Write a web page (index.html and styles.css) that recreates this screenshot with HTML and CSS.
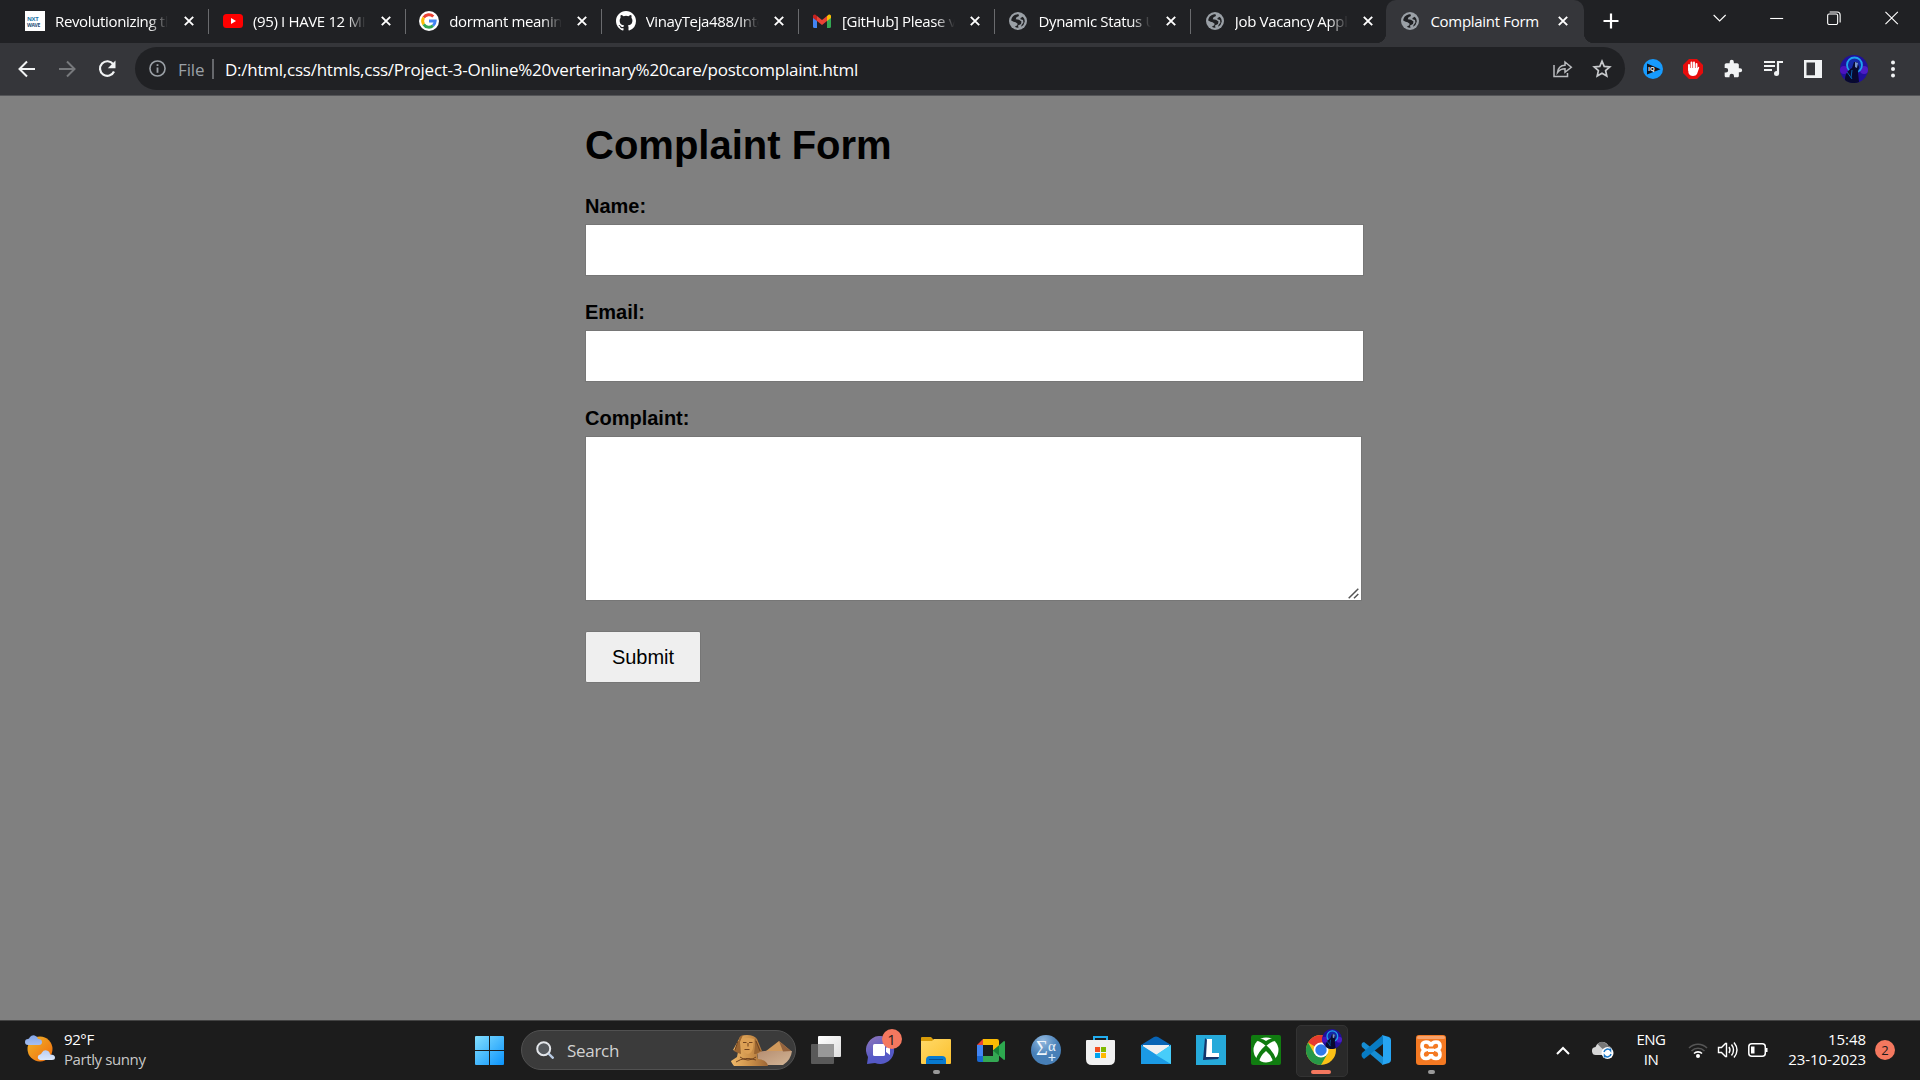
FILE: index.html
```html
<!DOCTYPE html>
<html lang="en">
<head>
<meta charset="utf-8">
<title>Complaint Form</title>
<link rel="stylesheet" href="styles.css">
</head>
<body>
<svg class="defs" width="0" height="0">
  <symbol id="globe" viewBox="0 0 18 18"><circle cx="9" cy="9" r="9" fill="#9aa0a6"/><path d="M2.200 8.500C2.500 4.500 5.500 2.200 9.500 2.200L10 4 7.500 5.200 6.700 7.200l3.300.6 2.500 1.700-.5 2.500-3 1.500.5 2.200q-2 .2-3.700-1l2.500-1.500.3-1.500-2-1.500-2-.5z" fill="#202124"/><path d="M11.500 6l2.300-1.200q2 2 2 4.700-.6 3.500-3.600 5.200l.3-1.700 1.900-2.500-.4-2.500-2.500-.8z" fill="#202124"/></symbol>
  <symbol id="x" viewBox="0 0 10 10"><path d="M.8.8l8.400 8.400M9.200.8L.8 9.200" stroke="#fff" stroke-width="1.900"/></symbol>
  <symbol id="face" viewBox="0 0 28 28"><circle cx="14" cy="14" r="14" fill="#20109c"/><circle cx="4" cy="15" r="4" fill="#4c12bd"/><circle cx="24" cy="15" r="4" fill="#4c1cc5"/><circle cx="14.500" cy="10" r="7.500" fill="#1529a9" stroke="#1fa4ee" stroke-width="1.800"/><path d="M5 25c0-6 3-10 7-12l2-6 3 0 2 5-1 5 1 10c-5 2-11 1-14-2z" fill="#08092f"/><path d="M15 7l3 1-1 5-2-1z" fill="#7894ca"/><path d="M7 17l5 7M12 15l-1 8" stroke="#0a62ae"/></symbol>
</svg>

<header class="tabs">
  <div class="tab"><svg class="fav" viewBox="0 0 20 20"><path d="M0 0h20v20H0z" fill="#fff"/><text x="2" y="10" class="nxt blue">NXT</text><text x="2" y="15.500" class="wave">WAVE</text></svg><span>Revolutionizing the</span><svg class="close"><use href="#x"/></svg></div>
  <div class="tab"><svg class="fav" viewBox="0 0 20 20"><rect y="3" width="20" height="14" rx="3.500" fill="red"/><path d="M8 7l5 3-5 3z" fill="#fff"/></svg><span>(95) I HAVE 12 MIN</span><svg class="close"><use href="#x"/></svg></div>
  <div class="tab"><svg class="fav" viewBox="0 0 20 20"><circle cx="10" cy="10" r="10" fill="#fff"/><g fill="none" stroke-width="2.900"><path d="M4.700 6.600A6.200 6.200 0 0 1 14.300 5.500" stroke="#ea4335"/><path d="M4.700 6.600a6.200 6.200 0 0 0 0 6.800" stroke="#fbbc05"/><path d="M4.700 13.400a6.200 6.200 0 0 0 9.300 1.300" stroke="#34a853"/><path d="M14 14.700A6.200 6.200 0 0 0 16.200 10H10" stroke="#4285f4"/></g></svg><span>dormant meaning</span><svg class="close"><use href="#x"/></svg></div>
  <div class="tab"><svg class="fav" viewBox="0 0 16 16"><path fill="#fff" d="M8 0C3.580 0 0 3.580 0 8c0 3.540 2.290 6.530 5.470 7.590.4.070.55-.17.55-.38 0-.19-.01-.82-.01-1.490-2.010.37-2.530-.49-2.690-.94-.09-.23-.48-.94-.82-1.130-.28-.15-.68-.52-.01-.53.63-.01 1.080.58 1.230.82.72 1.210 1.870.87 2.330.66.070-.52.28-.87.51-1.070-1.780-.2-3.640-.89-3.640-3.950 0-.87.31-1.590.82-2.150-.08-.2-.36-1.020.08-2.120 0 0 .67-.21 2.200.82a7.600 7.600 0 0 1 4 0c1.530-1.040 2.200-.82 2.200-.82.44 1.100.16 1.920.08 2.120.51.56.82 1.270.82 2.150 0 3.070-1.870 3.750-3.650 3.950.29.25.54.73.54 1.480 0 1.070-.01 1.930-.01 2.200 0 .21.15.46.55.38A8.010 8.010 0 0 0 16 8c0-4.420-3.580-8-8-8z"/></svg><span>VinayTeja488/Intern</span><svg class="close"><use href="#x"/></svg></div>
  <div class="tab"><svg class="fav" viewBox="0 0 20 20"><path d="M1 6l4 3v8H2.500Q1 17 1 15.500z" fill="#4285f4"/><path d="M15 9l4-3v9.500q0 1.500-1.500 1.500H15z" fill="#34a853"/><path d="M15 5l1.500-1.200c1.200-.9 2.500.1 2.500 1.200v2l-4 3z" fill="#fbbc04"/><path d="M5 5l5 4 5-4v5l-5 4-5-4z" fill="#ea4335"/><path d="M1 7V5c0-1.100 1.300-2.100 2.500-1.200L5 5v5z" fill="#c5221f"/></svg><span>[GitHub] Please verify</span><svg class="close"><use href="#x"/></svg></div>
  <div class="tab"><svg class="fav globe"><use href="#globe"/></svg><span>Dynamic Status Up</span><svg class="close"><use href="#x"/></svg></div>
  <div class="tab last"><svg class="fav globe"><use href="#globe"/></svg><span>Job Vacancy Appl</span><svg class="close"><use href="#x"/></svg></div>
  <div class="tab active"><svg class="fav globe"><use href="#globe"/></svg><span>Complaint Form</span><svg class="close"><use href="#x"/></svg></div>
  <svg class="plus" viewBox="0 0 16 16"><path d="M8 .5v15M.5 8h15" stroke="#fff" stroke-width="2.200"/></svg>
  <div class="window-buttons">
    <svg viewBox="0 0 14 14"><path d="M1 4l6 6 6-6" /></svg>
    <svg viewBox="0 0 14 14"><path d="M.5 7.500h13"/></svg>
    <svg viewBox="0 0 14 14"><rect x="1" y="3" width="10" height="10.500" rx="1.500"/><path d="M3 1h7.500q3 0 3 3v7.500"/></svg>
    <svg viewBox="0 0 14 14"><path d="M.8.800l12.400 12.400M13.200.8L.8 13.200"/></svg>
  </div>
</header>

<nav class="toolbar">
  <div class="nav-buttons">
    <svg viewBox="0 0 20 20"><path d="M18 10H3M10 2.500L2.500 10l7.500 7.500" stroke="#f1f3f4" stroke-width="2"/></svg>
    <svg viewBox="0 0 20 20"><path d="M2 10h15M10 2.500l7.500 7.500-7.500 7.500" stroke="#77797c" stroke-width="2"/></svg>
    <svg viewBox="0 0 20 20"><path d="M16.200 5.200A7.300 7.300 0 1 0 17 12.500" stroke="#f1f3f4" stroke-width="2.200"/><path d="M18.500 1.500v7.700h-7.700z" fill="#f1f3f4"/></svg>
  </div>
  <div class="omnibox">
    <svg class="info" viewBox="0 0 16 16"><circle cx="8" cy="8" r="7.100" stroke="#9aa0a6" stroke-width="1.500"/><path d="M8 7v5M8 4v1.700" stroke="#9aa0a6" stroke-width="1.700"/></svg>
    <span class="scheme">File</span><i></i>
    <span class="url">D:/html,css/htmls,css/Project-3-Online%20verterinary%20care/postcomplaint.html</span>
    <svg class="share" viewBox="0 0 20 20"><path d="M1 6v11.500h13.500V14M4.500 13.500c.5-4.500 3-7 7.500-7.200V3l6.300 5.300-6.300 5v-3.500c-3.500 0-5.500 1-7.500 3.700z" stroke="#b9bbbe" stroke-width="1.500"/></svg>
    <svg class="star" viewBox="0 0 20 20"><path d="M10 2.200l2.200 5.200 5.600.5-4.200 3.700 1.200 5.500L10 14.200l-4.800 2.900 1.200-5.500-4.200-3.700 5.600-.5z" stroke="#c7c9cc" stroke-width="1.700"/></svg>
  </div>
  <div class="extensions">
    <svg viewBox="0 0 20 20"><circle cx="10" cy="10" r="10" fill="#179bfd"/><path d="M4 4.500l13.500 5.700L4 15.500z" fill="#10131a"/><text class="iq" x="5" y="12.200">IQ</text></svg>
    <svg viewBox="0 0 20 20"><path d="M6 0h8l6 6v8l-6 6H6l-6-6V6z" fill="#e60c0c"/><path d="M6 11V6M8.500 10V3.500M11 10V3.500M13.500 11V5" stroke="#fff" stroke-width="1.900" stroke-linecap="round"/><path d="M5.100 9h9.300l1-1.300q1 0 .8 1L14 15q-1 2-4 2-3.500 0-4.500-3z" fill="#fff"/></svg>
    <svg viewBox="0 0 24 24"><path d="M20.500 11H19V7c0-1.100-.9-2-2-2h-4V3.500a2.500 2.500 0 0 0-5 0V5H4c-1.100 0-2 .9-2 2v3.800h1.500a2.700 2.700 0 0 1 0 5.400H2V20c0 1.100.9 2 2 2h3.800v-1.500a2.700 2.700 0 0 1 5.400 0V22H17c1.100 0 2-.9 2-2v-4h1.500a2.500 2.500 0 0 0 0-5z" fill="#f1f3f4"/></svg>
    <svg viewBox="0 0 20 20"><path d="M1 3h11M1 7h11M1 11h8" stroke="#f1f3f4" stroke-width="2"/><circle cx="13.500" cy="14.500" r="2.500" fill="#f1f3f4"/><path d="M15 15V3h5" stroke="#f1f3f4" stroke-width="2.200"/></svg>
    <svg viewBox="0 0 20 20"><path d="M1 1h18v18H1zM3.500 3.500v12.800h8.500V3.500z" fill="#f1f3f4" fill-rule="evenodd"/></svg>
    <svg class="avatar"><use href="#face"/></svg>
    <svg viewBox="0 0 20 20"><g fill="#f1f3f4"><circle cx="10" cy="3.500" r="2"/><circle cx="10" cy="10" r="2"/><circle cx="10" cy="16.500" r="2"/></g></svg>
  </div>
</nav>

<main class="page">
  <form class="complaint">
    <h1>Complaint Form</h1>
    <label for="name">Name:</label>
    <input id="name" type="text">
    <label for="email">Email:</label>
    <input id="email" type="email">
    <label for="complaint">Complaint:</label>
    <div class="message">
      <textarea id="complaint"></textarea>
      <svg class="grip" viewBox="0 0 11 11"><path d="M.7 10.300l9.600-9.600M6 10.300l4.300-4.300" stroke="#555" stroke-width="1.500"/></svg>
    </div>
    <button type="button">Submit</button>
  </form>
</main>

<footer class="taskbar">
  <div class="weather">
    <svg viewBox="0 0 30 28"><defs><linearGradient id="sun" x2="1" y2="1"><stop stop-color="#efb62a"/><stop offset="1" stop-color="#f26a0b"/></linearGradient><linearGradient id="cloud" x2="0" y2="1"><stop stop-color="#83a5e8"/><stop offset="1" stop-color="#dce8fc"/></linearGradient></defs><circle cx="15" cy="15" r="12.500" fill="url(#sun)"/><path d="M3 11a3 3 0 0 1 0-6Q4 5 5 3a4.500 4.500 0 0 1 8 2q4 0 4 3t-3 3zM15 26a2.800 2.800 0 0 1 0-5.500q1 0 2-2a4.300 4.300 0 0 1 8 2q5 0 5 3 0 2.500-3 2.500z" fill="url(#cloud)"/></svg>
    <div><b>92°F</b><span>Partly sunny</span></div>
  </div>
  <div class="app"><svg width="29" height="29" viewBox="0 0 29 29"><defs><linearGradient id="win" x2="1" y2="1"><stop stop-color="#83dfff"/><stop offset="1" stop-color="#0b93fb"/></linearGradient></defs><path d="M1 0h13v14H0V1q0-1 1-1zM15 0h13q1 0 1 1v13H15zM0 15h14v14H1q-1 0-1-1zM15 15h14v13q0 1-1 1H15z" fill="url(#win)"/></svg></div>
  <div class="search">
    <svg class="lens" viewBox="0 0 18 18"><circle cx="7.700" cy="7.700" r="6.500" fill="#55595d" stroke="#e3e6ea" stroke-width="2"/><path d="M12.500 12.500l5 5" stroke="#b9cbe3" stroke-width="2.400"/></svg>
    <span>Search</span>
    <svg class="sphinx" viewBox="0 0 61 31"><defs><linearGradient id="sand" x2="1"><stop stop-color="#f0b969"/><stop offset=".55" stop-color="#c98e48"/><stop offset="1" stop-color="#9b6535"/></linearGradient><linearGradient id="dune" x2="1" y2="1"><stop stop-color="#b58d70"/><stop offset="1" stop-color="#d3b596"/></linearGradient></defs><path d="M26 17q17-3 35-1-1 9-9 14H28z" fill="url(#dune)"/><path d="M48 6l12 10H35z" fill="#d19a5c"/><path d="M48 6l12 10-8 .5z" fill="#94633e"/><path d="M8 4Q9 0 16 0t10 4l5 12-5 3 1 5q9 1 10 7H3q-3-4-3-5l6-4 1-5-5-2z" fill="url(#sand)"/><path d="M8 5Q8 1 12 0L9 7l1 12-3-1-4-2zM24 3l6 13-5 3-2 0 1-8z" fill="#9a6531"/><path d="M10 4q6-2 13 0l-1 9q-1 5-5 6-5-1-6-6z" fill="#dca055"/><path d="M7 6l-3 9M25 6l4 10M12 7.500h3.500M18 7.500h3.500M13.500 14.500h5M17 8v3.500M9 22q8 6 16 0M5 27q9-6 20-2" fill="none" stroke="#70431f" stroke-width="1"/></svg>
  </div>
  <div class="app"><svg width="30" height="28" viewBox="0 0 30 28"><defs><linearGradient id="pane" x2="1" y2="1"><stop stop-color="#fff"/><stop offset="1" stop-color="#dedede"/></linearGradient></defs><rect y="8" width="23" height="20" rx="1" fill="#595959"/><rect x="7" width="23" height="21" rx="1" fill="url(#pane)"/><path d="M7 8h16v13H7z" fill="#989898"/></svg></div>
  <div class="app"><svg width="30" height="29" viewBox="0 0 30 29"><defs><linearGradient id="chat" x2=".5" y2="1"><stop stop-color="#9277b8"/><stop offset=".7" stop-color="#5559c6"/></linearGradient></defs><path d="M15 0a14 14 0 1 1-6 27L1 28l1-7A14 14 0 0 1 15 0z" fill="url(#chat)"/><rect x="7" y="8" width="12" height="12" rx="1.500" fill="#fff"/><path d="M20 12l4-3v10l-4-3z" fill="#fff"/></svg><em>1</em></div>
  <div class="app running"><svg width="30" height="28" viewBox="0 0 30 28"><defs><linearGradient id="folder" x2="1" y2="1"><stop stop-color="#ffd968"/><stop offset="1" stop-color="#fcc02d"/></linearGradient></defs><path d="M0 8V2q0-1 1-1h9l3 3h6v5z" fill="#d99c09"/><path d="M0 5h11l2-2h16q1 0 1 1v23q0 1-1 1H1q-1 0-1-1z" fill="url(#folder)"/><path d="M5 28v-4q0-4 4-4h12q4 0 4 4v4z" fill="#087ad0"/><path d="M8 23.500h14" stroke="#064f94" stroke-width="1"/></svg></div>
  <div class="app"><svg width="28" height="23" viewBox="0 0 28 23"><path d="M0 6l6-6v6z" fill="#ea4335"/><path d="M0 6h6v11H0z" fill="#4285f4"/><path d="M0 17h6v6H2q-2 0-2-2z" fill="#1967d2"/><path d="M6 0h14q2 0 2 2v10h-6V6H6z" fill="#fbbc04"/><path d="M6 17h10v-6h6v10q0 2-2 2H6z" fill="#34a853"/><path d="M16 11.500L27 2q1 0 1 1v17q0 1-1 1z" fill="#2da94f"/><path d="M16 11.500l6-5v10z" fill="#188038"/></svg></div>
  <div class="app"><svg width="30" height="30" viewBox="0 0 30 30"><defs><radialGradient id="orb" cx=".4" cy=".2"><stop stop-color="#92b9df"/><stop offset="1" stop-color="#477fb7"/></radialGradient></defs><circle cx="15" cy="15" r="15" fill="url(#orb)"/><text class="sigma" x="5" y="20">Σ</text><text class="alpha" x="17" y="16">α</text><path d="M21 19v7M17.500 22.500h7" stroke="#e2edf7" stroke-width="1.200"/></svg></div>
  <div class="app store"><svg width="29" height="29" viewBox="0 0 29 29"><path d="M8 6V1h13v5" fill="none" stroke="#22aef0" stroke-width="2"/><path d="M1 4h27q1 0 1 1v18q0 6-6 6H6q-6 0-6-6V5q0-1 1-1z" fill="#f1f1f1"/><path d="M9 11h5v5H9z" fill="#f25022"/><path d="M15 11h5v5h-5z" fill="#7fba00"/><path d="M9 17h5v5H9z" fill="#00a4ef"/><path d="M15 17h5v5h-5z" fill="#ffb900"/></svg></div>
  <div class="app"><svg width="30" height="28" viewBox="0 0 30 28"><path d="M0 9L13 1q2-1 4 0l13 8v4H0z" fill="#0864b5"/><path d="M2 9h26v6L15 22 2 14z" fill="#efeff1"/><path d="M0 9l15 10L30 9v19H0z" fill="#32bef1"/><path d="M0 9l30 19H0z" fill="#1b9ae5"/><path d="M15 19L30 9v19z" fill="#47cdfa"/></svg></div>
  <div class="app"><svg width="30" height="30" viewBox="0 0 30 30"><path d="M0 0h30v30H0z" fill="#26aada"/><path d="M9 3l2 2v16l12 1-1 2-15 1z" fill="#14346a"/><path d="M11 4h5v14h7v4H10z" fill="#fff"/></svg></div>
  <div class="app"><svg width="30" height="30" viewBox="0 0 30 30"><rect width="30" height="30" rx="2" fill="#107c10"/><circle cx="15" cy="15" r="12.500" fill="#fff"/><path d="M6 6q3 0 9 5 6-5 9-5l-1-2q-4-1-8 2-4-3-8-2zM15 10Q7 17 5 24q2 3 3 3 1-6 7-11 6 5 7 11 1 0 3-3Q23 17 15 10z" fill="#107c10"/></svg></div>
  <div class="app current"><svg width="32" height="32" viewBox="0 0 32 32"><circle cx="16" cy="16" r="15" fill="#fbc116"/><path d="M16 16L3 8.500A15 15 0 0 1 29 8.500H16z" fill="#e63b2e"/><path d="M3 8.500A15 15 0 0 0 16 31l6.500-11.200L9.500 19.800z" fill="#279847"/><circle cx="16" cy="16" r="7.500" fill="#fff"/><circle cx="16" cy="16" r="5.700" fill="#3079eb"/></svg><svg class="profile"><use href="#face"/></svg></div>
  <div class="app"><svg width="30" height="30" viewBox="0 0 30 30"><path d="M1 8l2-1L22 22v8L1 12q-1-2 0-4z" fill="#168dd3"/><path d="M1 22l2 2L22 9V0L1 18q-1 2 0 4z" fill="#087bc3"/><path d="M21 0l7 2q2 1 2 3v20q0 2-2 3l-7 2q1-1 1-3V3q0-2-1-3z" fill="#27a5f3"/></svg></div>
  <div class="app running"><svg width="30" height="30" viewBox="0 0 30 30"><rect width="30" height="30" rx="3" fill="#f47922"/><rect x="1" y="1" width="28" height="3" rx="1.500" fill="#f6a26c"/><path d="M9 15q-3-1-3-4 0-4 4-4t5 4q1-4 5-4t4 4q0 3-3 4 3 1 3 4.500 0 4-4 4t-5-4q-1 4-5 4t-4-4Q6 16 9 15zM12 15.200h6" fill="none" stroke="#fff" stroke-width="3.600"/></svg></div>
  <div class="tray">
    <svg class="w40" width="14" height="9" viewBox="0 0 14 9"><path d="M1 8l6-6 6 6" fill="none" stroke="#fff" stroke-width="2"/></svg>
    <svg class="w40" width="21" height="18" viewBox="0 0 21 18"><path d="M4 14a4 4 0 0 1-1-8Q5 1 10 1q4 0 6 4 4 1 3 5l-4 4z" fill="#d6d6d6"/><path d="M5 3q5-5 10 1l4 3-5 4-5-4z" fill="#777"/><circle cx="15" cy="12" r="6" fill="#fff"/><path d="M11.500 11a3.700 3.700 0 0 1 6.500-1.500V7.500M18.500 13a3.700 3.700 0 0 1-6.500 1.500v2" fill="none" stroke="#1976c5" stroke-width="1.500"/></svg>
    <div class="language"><span>ENG</span><span>IN</span></div>
    <svg class="w30" width="20" height="16" viewBox="0 0 20 16"><g fill="none" stroke-width="1.600"><path d="M1 6a12.700 12.700 0 0 1 18 0M3.500 9a9.200 9.200 0 0 1 13 0" stroke="#555"/><path d="M6 11.500a5.700 5.700 0 0 1 8 0" stroke="#fff"/></g><circle cx="10" cy="14" r="2" fill="#fff"/></svg>
    <svg class="w30" width="21" height="18" viewBox="0 0 21 18"><path d="M1 6.500h3l4-4h1v13H8l-4-4H1zM11.500 6q2 3 0 6M14 3.500q4 5.500 0 11M16.500 1.500q6 7.500 0 15" fill="none" stroke="#fff" stroke-width="1.400"/></svg>
    <svg class="w30" width="20" height="14" viewBox="0 0 20 14"><rect x=".8" y=".8" width="16.500" height="12.400" rx="3" fill="none" stroke="#fff" stroke-width="1.500"/><path d="M3 3.500h3.500v7H3zM18 5h1.500v4H18z" fill="#fff"/></svg>
    <div class="clock"><span>15:48</span><span>23-10-2023</span></div>
    <strong>2</strong>
  </div>
</footer>
</body>
</html>
```
FILE: styles.css
```css
* { box-sizing: border-box; }
body { margin: 0; width: 1920px; height: 1080px; overflow: hidden; display: flex; flex-direction: column; background: #808080; font-family: "Open Sans", "Noto Sans", sans-serif; color: #fff; }
svg { display: block; flex: none; }
.defs { position: absolute; }

.tabs { height: 43px; padding-left: 12px; display: flex; background: #202124; }
.tab { position: relative; flex: none; width: 196.4px; height: 43px; display: flex; align-items: center; padding: 0 14px 1px 14.500px; font-size: 15px; letter-spacing: -.35px; }
.tab:first-child { padding-left: 13px; }
.tab::after { content: ""; position: absolute; right: -1px; top: 9px; width: 1px; height: 25px; background: #6a6b6e; }
.tab.last::after, .tab.active::after { display: none; }
.fav { width: 20px; height: 20px; }
.fav.globe { width: 18px; height: 18px; margin: 0 1px; }
.tab span { width: 114px; margin-left: 10px; overflow: hidden; white-space: nowrap; -webkit-mask-image: linear-gradient(90deg, #000 82%, transparent 99%); mask-image: linear-gradient(90deg, #000 82%, transparent 99%); }
.tab.active span { -webkit-mask-image: none; mask-image: none; letter-spacing: -.3px; }
.close { width: 10px; height: 10px; margin-left: auto; }
.tab.active { width: 198px; padding-right: 16px; background: #35363a; border-radius: 10px 10px 0 0; }
.tab.active { margin-left: -.8px; }
.tab.active::before { content: ""; position: absolute; left: -10px; right: -10px; bottom: 0; height: 10px; background: radial-gradient(circle at 0 0, transparent 10px, #35363a 10.500px) left / 10px 10px no-repeat, radial-gradient(circle at 100% 0, transparent 10px, #35363a 10.500px) right / 10px 10px no-repeat; }
.nxt, .wave { font: 700 6px "Open Sans", sans-serif; fill: #234b76; }
.nxt.blue { fill: #2878aa; }
.wave { font-size: 5px; }
.plus { width: 16px; height: 16px; margin: 13px 0 0 19px; }
.window-buttons { display: flex; margin-left: auto; }
.window-buttons svg { width: 57.300px; height: 14px; margin-top: 11px; fill: none; stroke: #fff; stroke-width: 1.100; }

.toolbar { height: 53px; padding: 0 7px 1px; display: flex; align-items: center; background: #35363a; border-bottom: 1px solid #535457; }
.nav-buttons { display: flex; width: 128px; }
.nav-buttons svg { width: 40px; height: 20px; fill: none; }
.omnibox { width: 1490px; height: 43px; border-radius: 22px; background: #202124; display: flex; align-items: center; padding: 0 13px 0 14px; font-size: 17px; }
.omnibox svg { fill: none; }
.omnibox span { padding-top: 1px; }
.info { width: 17px; height: 17px; }
.scheme { margin-left: 12px; width: 34px; color: #9aa0a6; letter-spacing: -.1px; }
.omnibox i { width: 2px; height: 20px; background: #66686c; }
.url { margin-left: 11px; white-space: nowrap; letter-spacing: -.24px; }
.share { width: 20px; height: 20px; margin-left: auto; }
.star { width: 20px; height: 20px; margin-left: 19px; }
.extensions { display: flex; align-items: center; margin-left: 7.500px; }
.extensions svg { width: 40px; height: 20px; fill: none; }
.extensions .avatar { width: 28px; height: 28px; margin: 0 5px 0 7px; }
.iq { font: 700 6px "Open Sans", sans-serif; fill: #fff; }

.page { height: 924px; background: #808080; }
.complaint { width: 780px; margin: 0 0 0 585px; padding-top: 26px; display: flex; flex-direction: column; align-items: flex-start; font: 20px/23px "Liberation Sans", Arial, sans-serif; color: #000; }
.complaint h1 { margin: 0 0 27px; font-size: 40px; line-height: 46px; }
.complaint label { font-weight: 700; margin-bottom: 6px; }
.complaint input { width: 779px; height: 52px; margin: 0 0 25px; border: 1px solid #767676; background: #fff; }
.message { position: relative; width: 777px; height: 165px; margin: 0 0 30px; }
.complaint textarea { display: block; width: 100%; height: 100%; border: 1px solid #767676; background: #fff; resize: none; }
.grip { position: absolute; right: 3px; bottom: 2px; width: 11px; height: 11px; }
.complaint button { width: 116px; height: 52px; border: 1px solid #767676; border-radius: 2px; background: #efefef; color: #000; font: 20px "Liberation Sans", Arial, sans-serif; padding: 0; }

.taskbar { height: 60px; padding-bottom: 1px; background: #1c1c1c; border-top: 1px solid #434343; display: flex; align-items: center; font-size: 15px; }
.weather { width: 462px; padding-left: 25px; display: flex; align-items: center; gap: 9px; line-height: 20px; letter-spacing: -.4px; }
.weather svg { width: 30px; height: 28px; margin-bottom: 4px; }
.weather div, .language, .clock { margin-top: -3px; }
.weather b, .weather span { display: block; font-weight: 400; }
.weather span { color: #c8c8c8; }
.app { position: relative; flex: none; width: 55px; height: 50px; display: flex; align-items: center; justify-content: center; }
.store svg { margin-right: 2px; }
.search { width: 275px; height: 40px; margin: 0 2.500px 0 4px; border: 1px solid #515151; border-radius: 20px; background: #3b3b3b; display: flex; align-items: center; padding: 0 3px 0 14px; font-size: 17px; letter-spacing: -.3px; color: #d2d2d2; }
.lens { width: 18px; height: 18px; fill: none; }
.search span { margin-left: 13px; }
.sphinx { width: 61px; height: 31px; margin-left: auto; }
.app em { position: absolute; right: 7px; top: 4px; width: 20px; height: 20px; border-radius: 50%; background: #f4785f; color: #1c1c1c; font: 15px/20px "Open Sans", sans-serif; text-align: center; }
.running::after, .current::after { content: ""; position: absolute; bottom: 1px; left: 24px; width: 7px; height: 4px; border-radius: 2px; background: #999; }
.current::before { content: ""; position: absolute; left: 2px; top: 0; width: 50px; height: 50px; border: 1px solid #333; border-radius: 5px; background: #292929; }
.current svg { position: relative; }
.current::after { left: 17px; width: 20px; background: #f4785f; }
.current .profile { position: absolute; width: 20px; height: 20px; left: 28px; top: 4px; }
.sigma, .alpha { font: 20px "Liberation Serif", serif; fill: #edf4fb; }
.alpha { font-size: 15px; }
.tray { margin-left: auto; width: 377px; display: flex; align-items: center; line-height: 20px; }
.w40 { width: 40px; }
.w30 { width: 30px; }
.language { width: 60px; padding-right: 4px; display: flex; flex-direction: column; align-items: center; letter-spacing: -.5px; }
.clock { width: 93px; display: flex; flex-direction: column; align-items: flex-end; letter-spacing: -.05px; }
.tray strong { width: 20px; height: 20px; margin-left: 9px; border-radius: 50%; background: #f4785f; color: #1c1c1c; font-size: 13px; font-weight: 400; text-align: center; }
```
